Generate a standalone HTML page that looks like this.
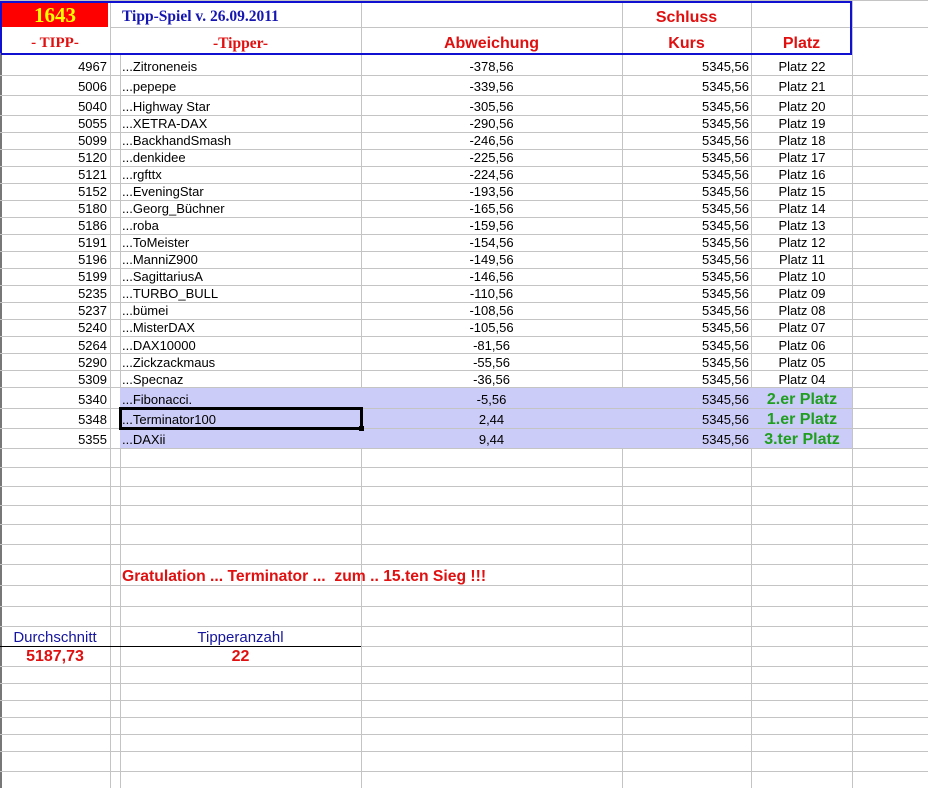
<!DOCTYPE html>
<html><head><meta charset="utf-8"><style>
body{margin:0;width:928px;height:788px;overflow:hidden;background:#fff;position:relative;font-family:"Liberation Sans",Arial,sans-serif;font-size:13px;color:#000}
.h{position:absolute;left:0;width:928px;height:1px;background:#c4c4c4}
.v{position:absolute;top:0;height:788px;width:1px;background:#c4c4c4}
.r{position:absolute;left:0;width:928px}
.r span{position:absolute;top:0;white-space:nowrap}
.a{right:821px;text-align:right}
.b{left:122px}
.c{left:361px;width:261px;text-align:center}
.d{right:179px;text-align:right}
.e{left:752px;width:100px;text-align:center}
.g{color:#1f9e1f;font-weight:bold;font-size:16px}
.hd{position:absolute;color:#e01010;font:bold 16px 'Liberation Sans',sans-serif;text-align:center}
</style></head><body>
<div class="v" style="left:0;width:2px;background:#777"></div>
<div class="v" style="left:110px"></div>
<div class="v" style="left:120px;top:53px;height:735px"></div>
<div class="v" style="left:361px"></div>
<div class="v" style="left:622px"></div>
<div class="v" style="left:751px"></div>
<div class="v" style="left:852px"></div>
<div style="position:absolute;left:120px;top:388px;width:732px;height:60px;background:#ccccf8"></div>
<div class="h" style="top:0"></div>
<div class="h" style="top:27px"></div>
<div class="h" style="top:75px"></div><div class="h" style="top:95px"></div><div class="h" style="top:115px"></div>
<div class="h" style="top:132px"></div><div class="h" style="top:149px"></div><div class="h" style="top:166px"></div>
<div class="h" style="top:183px"></div><div class="h" style="top:200px"></div><div class="h" style="top:217px"></div>
<div class="h" style="top:234px"></div><div class="h" style="top:251px"></div><div class="h" style="top:268px"></div>
<div class="h" style="top:285px"></div><div class="h" style="top:302px"></div><div class="h" style="top:319px"></div>
<div class="h" style="top:336px"></div><div class="h" style="top:353px"></div><div class="h" style="top:370px"></div>
<div class="h" style="top:387px"></div><div class="h" style="top:408px"></div><div class="h" style="top:428px"></div>
<div class="h" style="top:448px"></div><div class="h" style="top:467px"></div><div class="h" style="top:486px"></div>
<div class="h" style="top:505px"></div><div class="h" style="top:524px"></div><div class="h" style="top:544px"></div>
<div class="h" style="top:564px"></div><div class="h" style="top:585px"></div><div class="h" style="top:606px"></div>
<div class="h" style="top:626px"></div><div class="h" style="top:646px"></div><div class="h" style="top:666px"></div>
<div class="h" style="top:683px"></div><div class="h" style="top:700px"></div><div class="h" style="top:717px"></div>
<div class="h" style="top:734px"></div><div class="h" style="top:751px"></div><div class="h" style="top:771px"></div>
<div style="position:absolute;left:0;top:646px;width:361px;height:1px;background:#000"></div>
<div style="position:absolute;left:2px;top:2px;width:106px;height:25px;background:#f00;color:#ff0;font:bold 21px 'Liberation Serif',serif;text-align:center;line-height:27px">1643</div>
<div style="position:absolute;left:2px;top:27px;width:108px;height:26px;background:#fff"></div>
<div style="position:absolute;left:122px;top:8px;color:#1515b0;font:bold 15.5px 'Liberation Serif',serif;white-space:nowrap">Tipp-Spiel v. 26.09.2011</div>
<div style="position:absolute;left:0;top:35px;width:110px;text-align:center;color:#e01010;font:bold 15px 'Liberation Serif',serif">- TIPP-</div>
<div style="position:absolute;left:120px;top:35px;width:241px;text-align:center;color:#e01010;font:bold 15.5px 'Liberation Serif',serif">-Tipper-</div>
<div class="hd" style="left:361px;top:35px;width:261px">Abweichung</div>
<div class="hd" style="left:622px;top:9px;width:129px">Schluss</div>
<div class="hd" style="left:622px;top:35px;width:129px">Kurs</div>
<div class="hd" style="left:751px;top:35px;width:101px">Platz</div>
<div style="position:absolute;left:1px;top:1px;width:849px;height:50px;border:2px solid #1010d0;border-left:none"></div>
<div style="position:absolute;left:0;top:1px;width:2px;height:52px;background:#1010d0"></div>
<div class="r" style="top:59px"><span class="a">4967</span><span class="b">...Zitroneneis</span><span class="c">-378,56</span><span class="d">5345,56</span><span class="e">Platz 22</span></div>
<div class="r" style="top:79px"><span class="a">5006</span><span class="b">...pepepe</span><span class="c">-339,56</span><span class="d">5345,56</span><span class="e">Platz 21</span></div>
<div class="r" style="top:99px"><span class="a">5040</span><span class="b">...Highway Star</span><span class="c">-305,56</span><span class="d">5345,56</span><span class="e">Platz 20</span></div>
<div class="r" style="top:116px"><span class="a">5055</span><span class="b">...XETRA-DAX</span><span class="c">-290,56</span><span class="d">5345,56</span><span class="e">Platz 19</span></div>
<div class="r" style="top:133px"><span class="a">5099</span><span class="b">...BackhandSmash</span><span class="c">-246,56</span><span class="d">5345,56</span><span class="e">Platz 18</span></div>
<div class="r" style="top:150px"><span class="a">5120</span><span class="b">...denkidee</span><span class="c">-225,56</span><span class="d">5345,56</span><span class="e">Platz 17</span></div>
<div class="r" style="top:167px"><span class="a">5121</span><span class="b">...rgfttx</span><span class="c">-224,56</span><span class="d">5345,56</span><span class="e">Platz 16</span></div>
<div class="r" style="top:184px"><span class="a">5152</span><span class="b">...EveningStar</span><span class="c">-193,56</span><span class="d">5345,56</span><span class="e">Platz 15</span></div>
<div class="r" style="top:201px"><span class="a">5180</span><span class="b">...Georg_Büchner</span><span class="c">-165,56</span><span class="d">5345,56</span><span class="e">Platz 14</span></div>
<div class="r" style="top:218px"><span class="a">5186</span><span class="b">...roba</span><span class="c">-159,56</span><span class="d">5345,56</span><span class="e">Platz 13</span></div>
<div class="r" style="top:235px"><span class="a">5191</span><span class="b">...ToMeister</span><span class="c">-154,56</span><span class="d">5345,56</span><span class="e">Platz 12</span></div>
<div class="r" style="top:252px"><span class="a">5196</span><span class="b">...ManniZ900</span><span class="c">-149,56</span><span class="d">5345,56</span><span class="e">Platz 11</span></div>
<div class="r" style="top:269px"><span class="a">5199</span><span class="b">...SagittariusA</span><span class="c">-146,56</span><span class="d">5345,56</span><span class="e">Platz 10</span></div>
<div class="r" style="top:286px"><span class="a">5235</span><span class="b">...TURBO_BULL</span><span class="c">-110,56</span><span class="d">5345,56</span><span class="e">Platz 09</span></div>
<div class="r" style="top:303px"><span class="a">5237</span><span class="b">...bümei</span><span class="c">-108,56</span><span class="d">5345,56</span><span class="e">Platz 08</span></div>
<div class="r" style="top:320px"><span class="a">5240</span><span class="b">...MisterDAX</span><span class="c">-105,56</span><span class="d">5345,56</span><span class="e">Platz 07</span></div>
<div class="r" style="top:338px"><span class="a">5264</span><span class="b">...DAX10000</span><span class="c">-81,56</span><span class="d">5345,56</span><span class="e">Platz 06</span></div>
<div class="r" style="top:355px"><span class="a">5290</span><span class="b">...Zickzackmaus</span><span class="c">-55,56</span><span class="d">5345,56</span><span class="e">Platz 05</span></div>
<div class="r" style="top:372px"><span class="a">5309</span><span class="b">...Specnaz</span><span class="c">-36,56</span><span class="d">5345,56</span><span class="e">Platz 04</span></div>
<div class="r" style="top:392px"><span class="a">5340</span><span class="b">...Fibonacci.</span><span class="c">-5,56</span><span class="d">5345,56</span><span class="e g" style="top:-1px">2.er Platz</span></div>
<div class="r" style="top:412px"><span class="a">5348</span><span class="b">...Terminator100</span><span class="c">2,44</span><span class="d">5345,56</span><span class="e g" style="top:-1px">1.er Platz</span></div>
<div class="r" style="top:432px"><span class="a">5355</span><span class="b">...DAXii</span><span class="c">9,44</span><span class="d">5345,56</span><span class="e g" style="top:-1px">3.ter Platz</span></div>
<div style="position:absolute;left:119px;top:407px;width:238px;height:17px;border:3px solid #000"></div>
<div style="position:absolute;left:359px;top:426px;width:5px;height:5px;background:#000"></div>
<div style="position:absolute;left:122px;top:568px;color:#e01010;font:bold 15.7px 'Liberation Sans',sans-serif;white-space:nowrap">Gratulation ... Terminator ...&nbsp; zum .. 15.ten Sieg !!!</div>
<div style="position:absolute;left:0;top:629px;width:110px;text-align:center;color:#1515a0;font-size:15px">Durchschnitt</div>
<div style="position:absolute;left:120px;top:629px;width:241px;text-align:center;color:#1515a0;font-size:15px">Tipperanzahl</div>
<div style="position:absolute;left:0;top:648px;width:110px;text-align:center;color:#e01010;font:bold 16px 'Liberation Sans',sans-serif">5187,73</div>
<div style="position:absolute;left:120px;top:648px;width:241px;text-align:center;color:#e01010;font:bold 16px 'Liberation Sans',sans-serif">22</div>
</body></html>
